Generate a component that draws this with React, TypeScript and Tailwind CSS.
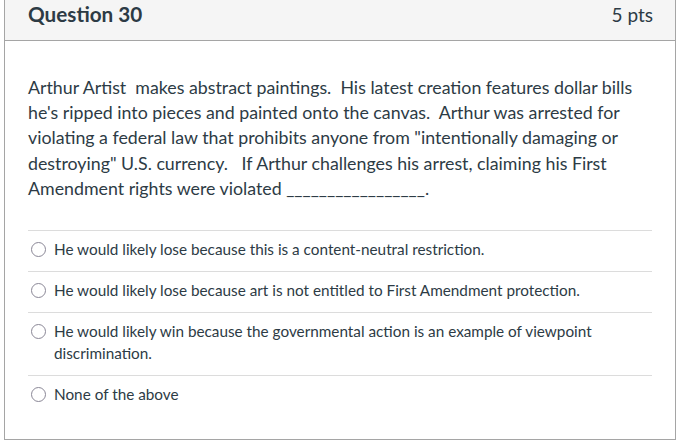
import React from 'react';

const answers: string[] = [
    'He would likely lose because this is a content-neutral restriction.',
    'He would likely lose because art is not entitled to First Amendment protection.',
    'He would likely win because the governmental action is an example of viewpoint discrimination.',
    'None of the above',
];

const Radio: React.FC = () => (
    <span className="mt-[4px] h-[15px] w-[15px] shrink-0 rounded-full border-[1.5px] border-[#8a8796] bg-white"></span>
);

const App: React.FC = () => {
    return (
        <div className="h-[441px] w-[695px] bg-white font-['Lato','Liberation_Sans',sans-serif] text-[#2d3b45]">
            <div className="ml-[4px] h-[440px] w-[672px] border-x border-b border-[#a5a5a5]">
                <header className="flex h-[41px] items-baseline justify-between border-b border-[#a5a5a5] bg-[#f5f5f5] pl-[23px] pr-[22px] pt-[4px]">
                    <h1 className="text-[20.7px] font-bold leading-[20px]">Question 30</h1>
                    <span className="text-[19px] leading-[20px]">5 pts</span>
                </header>

                <div className="px-[23px]">
                    <p className="pt-[34px] text-[17.8px] leading-[25.2px]">
                        Arthur Artist&nbsp; makes abstract paintings.&nbsp; His latest creation features dollar bills he's ripped into pieces and painted onto the canvas.&nbsp; Arthur was arrested for violating a federal law that prohibits anyone from "intentionally damaging or destroying" U.S. currency.&nbsp;&nbsp; If Arthur challenges his arrest, claiming his First Amendment rights were violated _________________.
                    </p>

                    <div className="mt-[29px]">
                        {answers.map((a, i) => (
                            <div
                                key={i}
                                className="flex gap-[8px] border-t border-[#dcdcdc] pl-[3px] pt-[7px] pb-[11px] text-[15.3px] leading-[22px]"
                            >
                                <Radio />
                                <span className="pr-[40px]">{a}</span>
                            </div>
                        ))}
                    </div>
                </div>
            </div>
        </div>
    );
};

export default App;
